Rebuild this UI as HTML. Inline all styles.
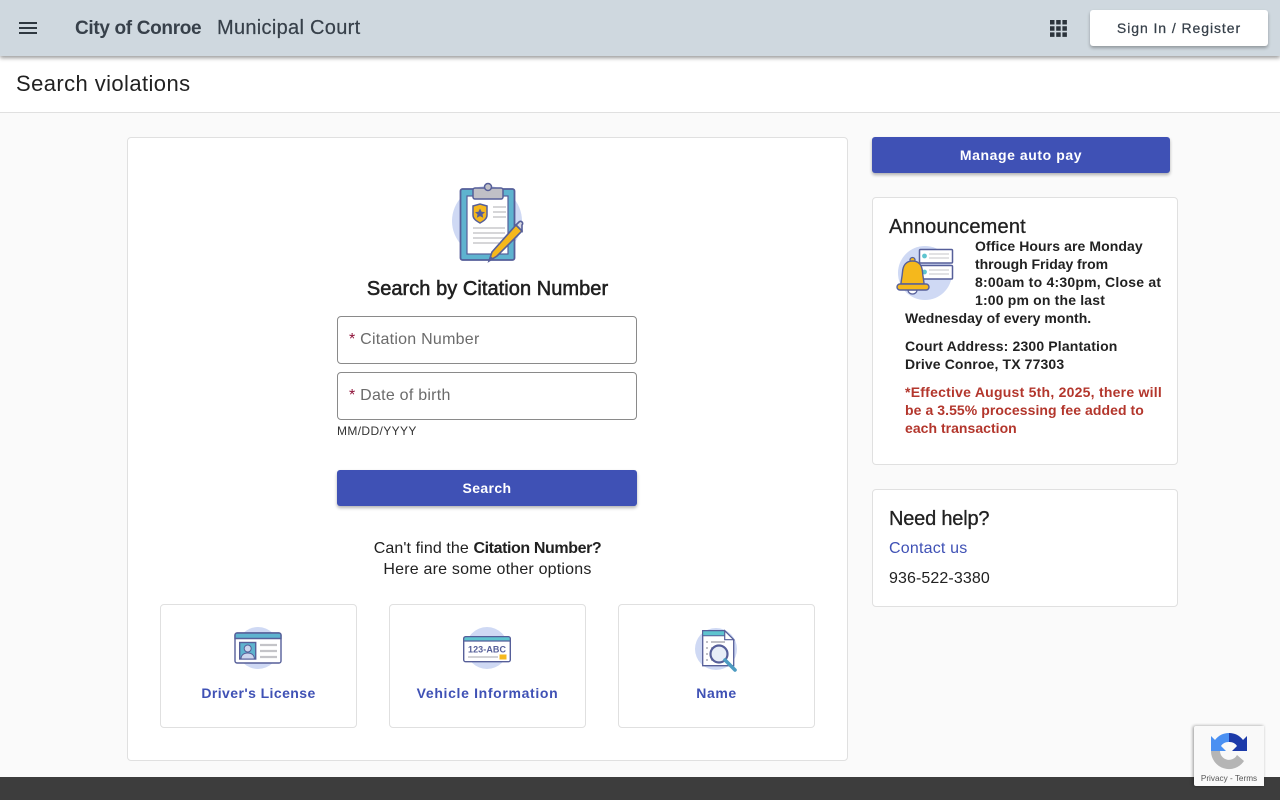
<!DOCTYPE html>
<html lang="en"><head><meta charset="utf-8"><title>Search violations</title>
<style>
*{box-sizing:border-box}
html,body{margin:0;padding:0;width:1280px;height:800px;overflow:hidden;background:#fafafa;font-family:"Liberation Sans",sans-serif;color:#212121}
.a{position:absolute;white-space:nowrap;line-height:1}
.card{position:absolute;background:#fff;border:1px solid #e0e0e0;border-radius:4px}
.btn{position:absolute;background:#3f51b5;color:#fff;border-radius:3px;font-weight:700;font-size:14px;text-align:center;box-shadow:0 2px 3px rgba(0,0,0,.3)}
.inp{position:absolute;left:337px;width:300px;height:48px;background:#fff;border:1px solid #8a8a8a;border-radius:4px;font-size:16px;color:#6b6b6b;line-height:46px;padding-left:11px;letter-spacing:.25px}
.inp b{color:#8e1238;font-weight:400}
.opt{position:absolute;top:604px;width:197px;height:124px;background:#fff;border:1px solid #e0e0e0;border-radius:4px}
.optl{position:absolute;top:686px;text-align:center;font-size:14px;font-weight:700;color:#3f51b5;line-height:14px}
.ann{position:absolute;font-size:14px;font-weight:700;line-height:18px;white-space:nowrap;color:#212121}
.ann span{display:block}
svg{position:absolute;display:block}
</style></head><body>
<div style="position:absolute;left:0;top:0;width:1280px;height:113px;background:#fff;border-bottom:1px solid #e0e0e0"></div>
<div style="position:absolute;left:0;top:0;width:1280px;height:56px;background:#cfd8df;box-shadow:0 2px 4px rgba(0,0,0,.4)"></div>
<svg style="left:16px;top:16px" width="24" height="24" viewBox="0 0 24 24"><path fill="#2f3840" d="M3 18h18v-2H3zM3 13h18v-2H3zM3 6v2h18V6z"/></svg>
<div class="a" style="left:75px;top:18px;font-size:19px;line-height:21px;font-weight:700;color:#37404a;letter-spacing:-.33px">City of Conroe</div>
<div class="a" style="left:217px;top:18px;font-size:20px;line-height:21px;color:#37404a;letter-spacing:.3px;-webkit-text-stroke:.2px #37404a">Municipal Court</div>
<svg style="left:1050px;top:20px" width="17" height="17" viewBox="0 0 17 17"><path fill="#2b333b" d="M0 0h4.500v4.500H0zM6.200 0h4.500v4.500H6.200zM12.400 0h4.500v4.500h-4.500zM0 6.200h4.500v4.500H0zM6.200 6.200h4.500v4.500H6.200zM12.400 6.200h4.500v4.500h-4.500zM0 12.400h4.500v4.500H0zM6.200 12.400h4.500v4.500H6.200zM12.400 12.400h4.500v4.500h-4.500z"/></svg>
<div style="position:absolute;left:1090px;top:10px;width:178px;height:36px;background:#fff;border-radius:3px;box-shadow:0 2px 3px rgba(0,0,0,.3);text-align:center;font-size:14px;line-height:36px;letter-spacing:.93px;color:#37404a;-webkit-text-stroke:.25px #37404a">Sign In / Register</div>
<div class="a" style="left:16px;top:72px;font-size:22px;line-height:24px;letter-spacing:.41px;color:#212121">Search violations</div>

<div class="card" style="left:127px;top:137px;width:721px;height:624px"></div>
<svg style="left:450px;top:180px" width="76" height="84" viewBox="0 0 76 84">
<circle cx="37" cy="41" r="35" fill="#cfd9f4"/>
<rect x="10.500" y="9" width="54" height="71" rx="2" fill="#5eb3cf" stroke="#565f99" stroke-width="1.800"/>
<rect x="17" y="16" width="41" height="58" fill="#fff" stroke="#565f99" stroke-width="1.200"/>
<rect x="23" y="8" width="30" height="11" rx="2" fill="#c0c0c6" stroke="#565f99" stroke-width="1.500"/>
<circle cx="38" cy="7" r="3.500" fill="#c0c0c6" stroke="#565f99" stroke-width="1.500"/>
<path d="M23 26l7-2 7 2v9c0 4-3.500 6-7 8-3.500-2-7-4-7-8z" fill="#f5b81c" stroke="#565f99" stroke-width="1.500"/>
<path d="M30 28.500l1.600 3.200 3.400.4-2.500 2.300.7 3.400-3.200-1.700-3.200 1.700.7-3.400-2.500-2.300 3.400-.4z" fill="#565f99"/>
<path d="M43 27h13M43 32h13M43 37h13M23 48h32M23 53h32M23 58h32M23 63h26" stroke="#c8c8cc" stroke-width="1.500"/>
<path d="M39 81l3-9 24-27 6 6-25 25z" fill="#f5b81c" stroke="#565f99" stroke-width="1.600"/>
<path d="M66 45l3-3c2-2 5 1 3 3l0 6z" fill="#d8d8e0" stroke="#565f99" stroke-width="1.600"/>
<path d="M39 81l1.500-5 3.500 3z" fill="#565f99"/>
</svg>
<div class="a" style="left:127px;width:721px;text-align:center;top:278px;font-size:20px;line-height:22px;letter-spacing:.05px;color:#212121;-webkit-text-stroke:.55px #212121">Search by Citation Number</div>
<div class="inp" style="top:316px"><b>*</b> Citation Number</div>
<div class="inp" style="top:372px"><b>*</b> Date of birth</div>
<div class="a" style="left:337px;top:424px;font-size:12px;line-height:14px;letter-spacing:.37px;color:#333">MM/DD/YYYY</div>
<div class="btn" style="left:337px;top:470px;width:300px;height:36px;line-height:36px;letter-spacing:.38px">Search</div>
<div class="a" style="left:127px;width:721px;text-align:center;top:538px;font-size:16px;line-height:21px;white-space:normal;letter-spacing:.1px;color:#212121">Can't find the <span style="font-weight:700;letter-spacing:-.4px">Citation Number?</span><br><span style="letter-spacing:.2px">Here are some other options</span></div>

<div class="opt" style="left:160px"></div>
<div class="opt" style="left:389px"></div>
<div class="opt" style="left:618px"></div>
<svg style="left:234px;top:626px" width="48" height="44" viewBox="0 0 48 44">
<circle cx="24" cy="22" r="21" fill="#cfd9f4"/>
<rect x="1" y="7" width="46" height="30" rx="2" fill="#fff" stroke="#565f99" stroke-width="1.400"/>
<path d="M1 12.500V9a2 2 0 0 1 2-2h42a2 2 0 0 1 2 2v3.500z" fill="#5eb3cf" stroke="#565f99" stroke-width="1.400"/>
<rect x="5.700" y="16.500" width="16" height="16.500" fill="#5eb3cf" stroke="#565f99" stroke-width="1.400"/>
<circle cx="13.700" cy="22.500" r="3.500" fill="#cdd6ee" stroke="#565f99"/>
<path d="M7 33c0-4 3-6 6.700-6s6.700 2 6.700 6z" fill="#cdd6ee" stroke="#565f99"/>
<path d="M26 19h17M26 25h17M26 31h17" stroke="#c4c4c8" stroke-width="2.200"/>
</svg>
<svg style="left:463px;top:626px" width="48" height="44" viewBox="0 0 48 44">
<circle cx="24" cy="22" r="21" fill="#cfd9f4"/>
<rect x=".7" y="10.700" width="46.600" height="25" rx="2" fill="#fff" stroke="#565f99" stroke-width="1.400"/>
<path d="M.7 15v-2.300a2 2 0 0 1 2-2h42.600a2 2 0 0 1 2 2V15z" fill="#5ec4cf" stroke="#565f99" stroke-width="1.200"/>
<text x="5" y="26.500" font-family="Liberation Sans" font-weight="700" font-size="9" fill="#565f99" textLength="38">123-ABC</text>
<path d="M5 31h30" stroke="#c4c4c8" stroke-width="1.500"/>
<rect x="36.500" y="28.500" width="7" height="5" fill="#f5b81c"/>
</svg>
<svg style="left:694px;top:628px" width="46" height="46" viewBox="0 0 46 46">
<circle cx="22" cy="21" r="21" fill="#cfd9f4"/>
<path d="M8.700 2.700h22l9 9v26h-31z" fill="#fff" stroke="#565f99" stroke-width="1.300"/>
<path d="M8.700 2.700h22l3 5H8.700z" fill="#5ec4cf" stroke="#565f99" stroke-width="1"/>
<path d="M30.700 2.700v9h9z" fill="#fff" stroke="#565f99" stroke-width="1.200"/>
<path d="M12 14h2M17 14h14M12 20h2M17 20h10M12 26h2M17 26h8M12 32h2M17 32h6" stroke="#b8b8be" stroke-width="1.800"/>
<circle cx="25" cy="26" r="8.500" fill="#e8eef7" stroke="#565f99" stroke-width="2.200"/>
<path d="M31 32l10 10" stroke="#4d9bc1" stroke-width="3.600" stroke-linecap="round"/>
</svg>
<div class="optl" style="left:160px;width:197px;letter-spacing:.42px">Driver's License</div>
<div class="optl" style="left:389px;width:197px;letter-spacing:.66px">Vehicle Information</div>
<div class="optl" style="left:618px;width:197px;letter-spacing:.6px">Name</div>

<div class="btn" style="left:872px;top:137px;width:298px;height:36px;line-height:36px;letter-spacing:.58px">Manage auto pay</div>

<div class="card" style="left:872px;top:197px;width:306px;height:268px"></div>
<div class="a" style="left:889px;top:216px;font-size:20px;line-height:22px;letter-spacing:.2px;color:#212121;-webkit-text-stroke:.3px #212121">Announcement</div>
<svg style="left:896px;top:245px" width="60" height="58" viewBox="0 0 60 58">
<circle cx="29" cy="28" r="27" fill="#cfd9f4"/>
<rect x="23.500" y="4.500" width="33" height="13.500" rx="1" fill="#fff" stroke="#565f99" stroke-width="1.500"/>
<rect x="23.500" y="20.500" width="33" height="13.500" rx="1" fill="#fff" stroke="#565f99" stroke-width="1.500"/>
<circle cx="28.500" cy="11" r="2.400" fill="#5ec4cf"/><circle cx="28.500" cy="27" r="2.400" fill="#5ec4cf"/>
<path d="M33 9h20M33 13h20M33 25h20M33 29h20" stroke="#c4c4c8"/>
<path d="M12 45a4.500 4 0 0 0 9 0z" fill="#fff" stroke="#565f99" stroke-width="1.300"/>
<circle cx="16.500" cy="15" r="2.500" fill="#f5b81c" stroke="#565f99" stroke-width="1.300"/>
<path d="M5 39c0-3 1-6 1.500-12 .5-7 4-11 10-11s9.500 4 10 11c.5 6 1.500 9 1.500 12z" fill="#f5b81c" stroke="#565f99" stroke-width="1.400"/>
<rect x="1" y="39" width="32" height="6" rx="3" fill="#f5b81c" stroke="#565f99" stroke-width="1.400"/>
</svg>
<div class="ann" style="left:975px;top:237px"><span style="letter-spacing:.09px">Office Hours are Monday</span><span style="letter-spacing:-.04px">through Friday from</span><span style="letter-spacing:.22px">8:00am to 4:30pm, Close at</span><span style="letter-spacing:.17px">1:00 pm on the last</span></div>
<div class="ann" style="left:905px;top:309px;letter-spacing:.02px">Wednesday of every month.</div>
<div class="ann" style="left:905px;top:337px"><span style="letter-spacing:.15px">Court Address: 2300 Plantation</span><span style="letter-spacing:.13px">Drive Conroe, TX 77303</span></div>
<div class="ann" style="left:905px;top:383px;color:#b3362c"><span style="letter-spacing:.24px">*Effective August 5th, 2025, there will</span><span style="letter-spacing:.07px">be a 3.55% processing fee added to</span><span style="letter-spacing:.03px">each transaction</span></div>

<div class="card" style="left:872px;top:489px;width:306px;height:118px"></div>
<div class="a" style="left:889px;top:508px;font-size:20px;line-height:22px;letter-spacing:-.2px;-webkit-text-stroke:.3px #212121">Need help?</div>
<div class="a" style="left:889px;top:540px;font-size:16px;line-height:18px;color:#3f51b5;letter-spacing:.2px">Contact us</div>
<div class="a" style="left:889px;top:570px;font-size:16px;line-height:18px;letter-spacing:.1px">936-522-3380</div>

<div style="position:absolute;left:0;top:777px;width:1280px;height:23px;background:#3d3d3d"></div>
<div style="position:absolute;left:1194px;top:726px;width:70px;height:60px;background:#f9f9f9;box-shadow:-1px 0 3px rgba(0,0,0,.4);border-radius:2px 0 0 2px"></div>
<svg style="left:1210px;top:732px" width="38" height="38" viewBox="0 0 38 38">
<path d="M1 19A18 18 0 0 0 34 29L27 23A9 9 0 0 1 10 19Z" fill="#b5b5b5"/>
<path d="M19 1A18 18 0 0 0 5 8L1 4V19H16L11 14A9 9 0 0 1 19 10Z" fill="#4a90f2"/>
<path d="M19 1A18 18 0 0 1 33 8L37 4V19H22L27 14A9 9 0 0 0 19 10Z" fill="#1c3aa9"/>
</svg>
<div class="a" style="left:1194px;top:773px;width:70px;text-align:center;font-size:8.2px;line-height:11px;color:#555">Privacy - Terms</div>
</body></html>
